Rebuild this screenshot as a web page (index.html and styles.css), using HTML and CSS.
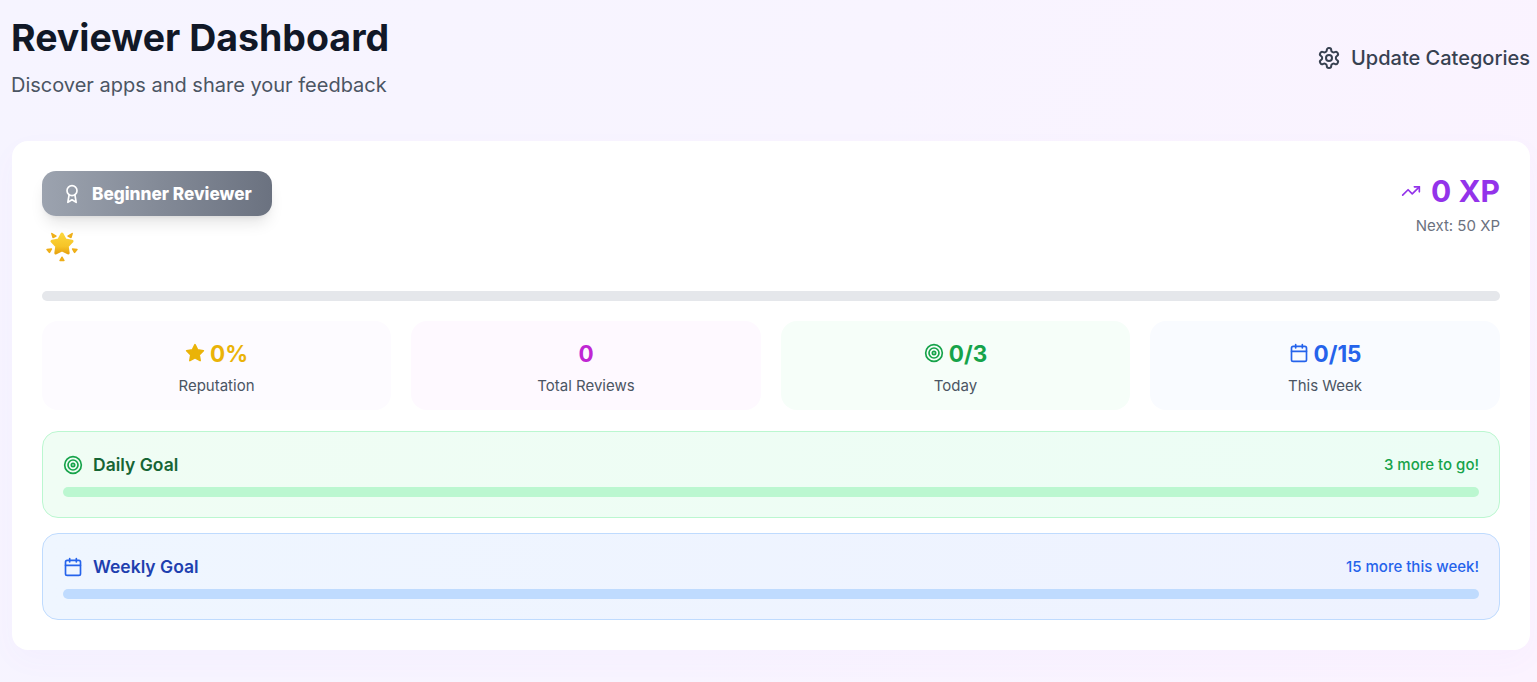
FILE: index.html
```html
<!DOCTYPE html>
<html lang="en">
<head>
<meta charset="utf-8">
<title>Reviewer Dashboard</title>
<link rel="stylesheet" href="styles.css">
</head>
<body>
<main class="page">
  <header class="top">
    <div class="titles">
      <h1 class="title">Reviewer Dashboard</h1>
      <p class="subtitle">Discover apps and share your feedback</p>
    </div>
    <button class="update">
      <svg class="icon-gear" viewBox="0 0 24 24" fill="none" stroke="currentColor" stroke-width="2" stroke-linecap="round" stroke-linejoin="round"><path d="M12.22 2h-.44a2 2 0 0 0-2 2v.18a2 2 0 0 1-1 1.73l-.43.25a2 2 0 0 1-2 0l-.15-.08a2 2 0 0 0-2.73.73l-.22.38a2 2 0 0 0 .73 2.73l.15.1a2 2 0 0 1 1 1.72v.51a2 2 0 0 1-1 1.74l-.15.09a2 2 0 0 0-.73 2.73l.22.38a2 2 0 0 0 2.73.73l.15-.08a2 2 0 0 1 2 0l.43.25a2 2 0 0 1 1 1.73V20a2 2 0 0 0 2 2h.44a2 2 0 0 0 2-2v-.18a2 2 0 0 1 1-1.73l.43-.25a2 2 0 0 1 2 0l.15.08a2 2 0 0 0 2.73-.73l.22-.39a2 2 0 0 0-.73-2.73l-.15-.08a2 2 0 0 1-1-1.74v-.5a2 2 0 0 1 1-1.74l.15-.09a2 2 0 0 0 .73-2.73l-.22-.38a2 2 0 0 0-2.73-.73l-.15.08a2 2 0 0 1-2 0l-.43-.25a2 2 0 0 1-1-1.73V4a2 2 0 0 0-2-2z"/><circle cx="12" cy="12" r="3"/></svg>
      <span>Update Categories</span>
    </button>
  </header>

  <section class="card">
    <div class="rank-row">
      <div class="rank">
        <div class="badge">
          <svg class="icon-award" viewBox="0 0 24 24" fill="none" stroke="currentColor" stroke-width="2" stroke-linecap="round" stroke-linejoin="round"><circle cx="12" cy="8" r="6"/><path d="M15.477 12.89 17 22l-5-3-5 3 1.523-9.11"/></svg>
          <span>Beginner Reviewer</span>
        </div>
        <svg class="glowing-star" viewBox="0 0 32 32" aria-label="glowing star">
          <defs>
            <linearGradient id="starfill" x1="0" y1="0" x2="0" y2="1"><stop offset="0" stop-color="#fcd53a"/><stop offset=".65" stop-color="#f6c428"/><stop offset="1" stop-color="#e8a512"/></linearGradient>
          </defs>
          <polygon points="16,3 19.23,9.05 26,10.25 21.23,15.2 22.17,22 16,19 9.83,22 10.77,15.2 6,10.25 12.77,9.05" fill="url(#starfill)" stroke="url(#starfill)" stroke-width="3" stroke-linejoin="round"/>
          <path d="M5.8 2.5 10 5 7 6.5z M26.2 2.5 22 5 25 6.5z M1 18.5l4.5-.5-2 3.5z M31 18.5l-4.5-.5 2 3.5z M16 26.2l2 3.3h-4z" fill="#f0b41c" stroke="#eeae18" stroke-width="1.4" stroke-linejoin="round"/>
        </svg>
      </div>
      <div class="xp">
        <div class="xp-value">
          <svg class="icon-trend" viewBox="0 0 24 24" fill="none" stroke="currentColor" stroke-width="2" stroke-linecap="round" stroke-linejoin="round"><polyline points="22 7 13.5 15.5 8.5 10.5 2 17"/><polyline points="16 7 22 7 22 13"/></svg>
          <span>0 XP</span>
        </div>
        <div class="xp-next">Next: 50 XP</div>
      </div>
    </div>

    <div class="xp-track"></div>

    <div class="stats">
      <div class="stat stat-rep">
        <div class="stat-value">
          <svg class="stat-icon" viewBox="0 0 24 24" fill="currentColor" stroke="currentColor" stroke-width="2" stroke-linecap="round" stroke-linejoin="round"><polygon points="12 2 15.09 8.26 22 9.27 17 14.14 18.18 21.02 12 17.77 5.82 21.02 7 14.14 2 9.27 8.91 8.26 12 2"/></svg>
          <span>0%</span>
        </div>
        <div class="stat-label">Reputation</div>
      </div>
      <div class="stat stat-total">
        <div class="stat-value"><span>0</span></div>
        <div class="stat-label">Total Reviews</div>
      </div>
      <div class="stat stat-today">
        <div class="stat-value">
          <svg class="stat-icon" viewBox="0 0 24 24" fill="none" stroke="currentColor" stroke-width="2" stroke-linecap="round" stroke-linejoin="round"><circle cx="12" cy="12" r="10"/><circle cx="12" cy="12" r="6"/><circle cx="12" cy="12" r="2"/></svg>
          <span>0/3</span>
        </div>
        <div class="stat-label">Today</div>
      </div>
      <div class="stat stat-week">
        <div class="stat-value">
          <svg class="stat-icon" viewBox="0 0 24 24" fill="none" stroke="currentColor" stroke-width="2" stroke-linecap="round" stroke-linejoin="round"><path d="M8 2v4"/><path d="M16 2v4"/><rect x="3" y="4" width="18" height="18" rx="2"/><path d="M3 10h18"/></svg>
          <span>0/15</span>
        </div>
        <div class="stat-label">This Week</div>
      </div>
    </div>

    <div class="goal goal-daily">
      <div class="goal-head">
        <div class="goal-name">
          <svg class="goal-icon" viewBox="0 0 24 24" fill="none" stroke="currentColor" stroke-width="2" stroke-linecap="round" stroke-linejoin="round"><circle cx="12" cy="12" r="10"/><circle cx="12" cy="12" r="6"/><circle cx="12" cy="12" r="2"/></svg>
          <span>Daily Goal</span>
        </div>
        <span class="goal-note">3 more to go!</span>
      </div>
      <div class="goal-track"></div>
    </div>

    <div class="goal goal-weekly">
      <div class="goal-head">
        <div class="goal-name">
          <svg class="goal-icon" viewBox="0 0 24 24" fill="none" stroke="currentColor" stroke-width="2" stroke-linecap="round" stroke-linejoin="round"><path d="M8 2v4"/><path d="M16 2v4"/><rect x="3" y="4" width="18" height="18" rx="2"/><path d="M3 10h18"/></svg>
          <span>Weekly Goal</span>
        </div>
        <span class="goal-note">15 more this week!</span>
      </div>
      <div class="goal-track"></div>
    </div>
  </section>
</main>
</body>
</html>
```

FILE: styles.css
```css
* { box-sizing: border-box; }
html, body { margin: 0; height: 100%; }
body {
  font-family: Inter, "Liberation Sans", sans-serif;
  background: linear-gradient(110deg, #f6f4ff 0%, #f8f4ff 50%, #fbf3ff 100%);
  overflow: hidden;
}
.page { padding: 10px 7px 0 11px; }
.top {
  display: flex;
  justify-content: space-between;
  align-items: center;
  height: 131px;
  padding-bottom: 35px;
}
.titles { display: flex; flex-direction: column; align-self: flex-start; margin-top: 4px; }
.title {
  margin: 0;
  font-size: 37.5px;
  line-height: 48px;
  font-weight: 700;
  color: #111827;
}
.subtitle {
  margin: 9px 0 0;
  font-size: 20px;
  line-height: 28px;
  color: #4b5563;
}
.update {
  display: flex;
  align-items: center;
  gap: 10px;
  padding: 0;
  border: 0;
  background: none;
  font: 500 20px/28px Inter, "Liberation Sans", sans-serif;
  color: #374151;
}
.icon-gear { width: 24px; height: 24px; }
.card {
  margin-left: 1px;
  height: 509px;
  padding: 30px;
  background: #fff;
  border-radius: 16px;
  box-shadow: 0 10px 30px rgba(168, 85, 247, 0.03);
}
.rank-row { display: flex; justify-content: space-between; align-items: flex-start; height: 120px; }
.rank { display: flex; flex-direction: column; align-items: flex-start; }
.badge {
  display: flex;
  align-items: center;
  gap: 10px;
  height: 45px;
  padding: 0 20px;
  width: 230px;
  border-radius: 14px;
  background: linear-gradient(90deg, #9ca3af, #6b7280);
  box-shadow: 0 10px 15px -3px rgba(0, 0, 0, .1), 0 4px 6px -4px rgba(0, 0, 0, .1);
  color: #fff;
  font-size: 17.2px;
  line-height: 28px;
  font-weight: 800;
  white-space: nowrap;
}
.icon-award { width: 20px; height: 20px; flex: none; }
.glowing-star { width: 32px; height: 32px; margin: 15px 0 0 4px; }
.xp { display: flex; flex-direction: column; align-items: flex-end; }
.xp-value {
  display: flex;
  align-items: center;
  gap: 10px;
  height: 40px;
  font-size: 30px;
  font-weight: 700;
  color: #9333ea;
}
.icon-trend { width: 20px; height: 20px; }
.xp-next { margin-top: 5px; font-size: 15px; line-height: 20px; color: #6b7280; }
.xp-track { height: 10px; border-radius: 5px; background: #e5e7eb; }
.stats {
  display: grid;
  grid-template-columns: 349fr 350fr 349fr 350fr;
  gap: 20px;
  margin-top: 20px;
}
.stat {
  height: 89px;
  border-radius: 16px;
  display: flex;
  flex-direction: column;
  align-items: center;
  padding-top: 16px;
}
.stat-value {
  display: flex;
  align-items: center;
  gap: 5px;
  height: 32px;
  font-size: 22.5px;
  font-weight: 700;
}
.stat-icon { width: 20px; height: 20px; }
.stat-label { margin-top: 7px; font-size: 15px; line-height: 20px; color: #4b5563; }
.stat-rep { background: #fdfbff; }
.stat-rep .stat-value { color: #eab308; }
.stat-total { background: #fef9ff; }
.stat-total .stat-value { color: #c026d3; }
.stat-today { background: #f6fef9; }
.stat-today .stat-value { color: #16a34a; }
.stat-week { background: #f9fbff; }
.stat-week .stat-value { color: #2563eb; }
.goal {
  height: 87px;
  margin-top: 15px;
  padding: 20px;
  border: 1px solid;
  border-radius: 16px;
}
.stats + .goal { margin-top: 21px; }
.goal-head { display: flex; justify-content: space-between; align-items: center; height: 26px; }
.goal-name { display: flex; align-items: center; gap: 10px; font-size: 17.5px; font-weight: 600; }
.goal-name span { margin-top: -2px; }
.goal-icon { width: 20px; height: 20px; }
.goal-note { margin-bottom: 2px; font-size: 15px; font-weight: 500; }
.goal-track { height: 10px; margin-top: 9px; border-radius: 5px; }
.goal-daily {
  background: linear-gradient(90deg, #f0fdf4, #ecfdf5);
  border-color: #bbf7d0;
}
.goal-daily .goal-name { color: #166534; }
.goal-daily .goal-icon, .goal-daily .goal-note { color: #16a34a; }
.goal-daily .goal-track { background: #bbf7d0; }
.goal-weekly {
  background: linear-gradient(90deg, #eff6ff, #eef2ff);
  border-color: #bfdbfe;
}
.goal-weekly .goal-name { color: #1e40af; }
.goal-weekly .goal-icon, .goal-weekly .goal-note { color: #2563eb; }
.goal-weekly .goal-track { background: #bfdbfe; }
```
